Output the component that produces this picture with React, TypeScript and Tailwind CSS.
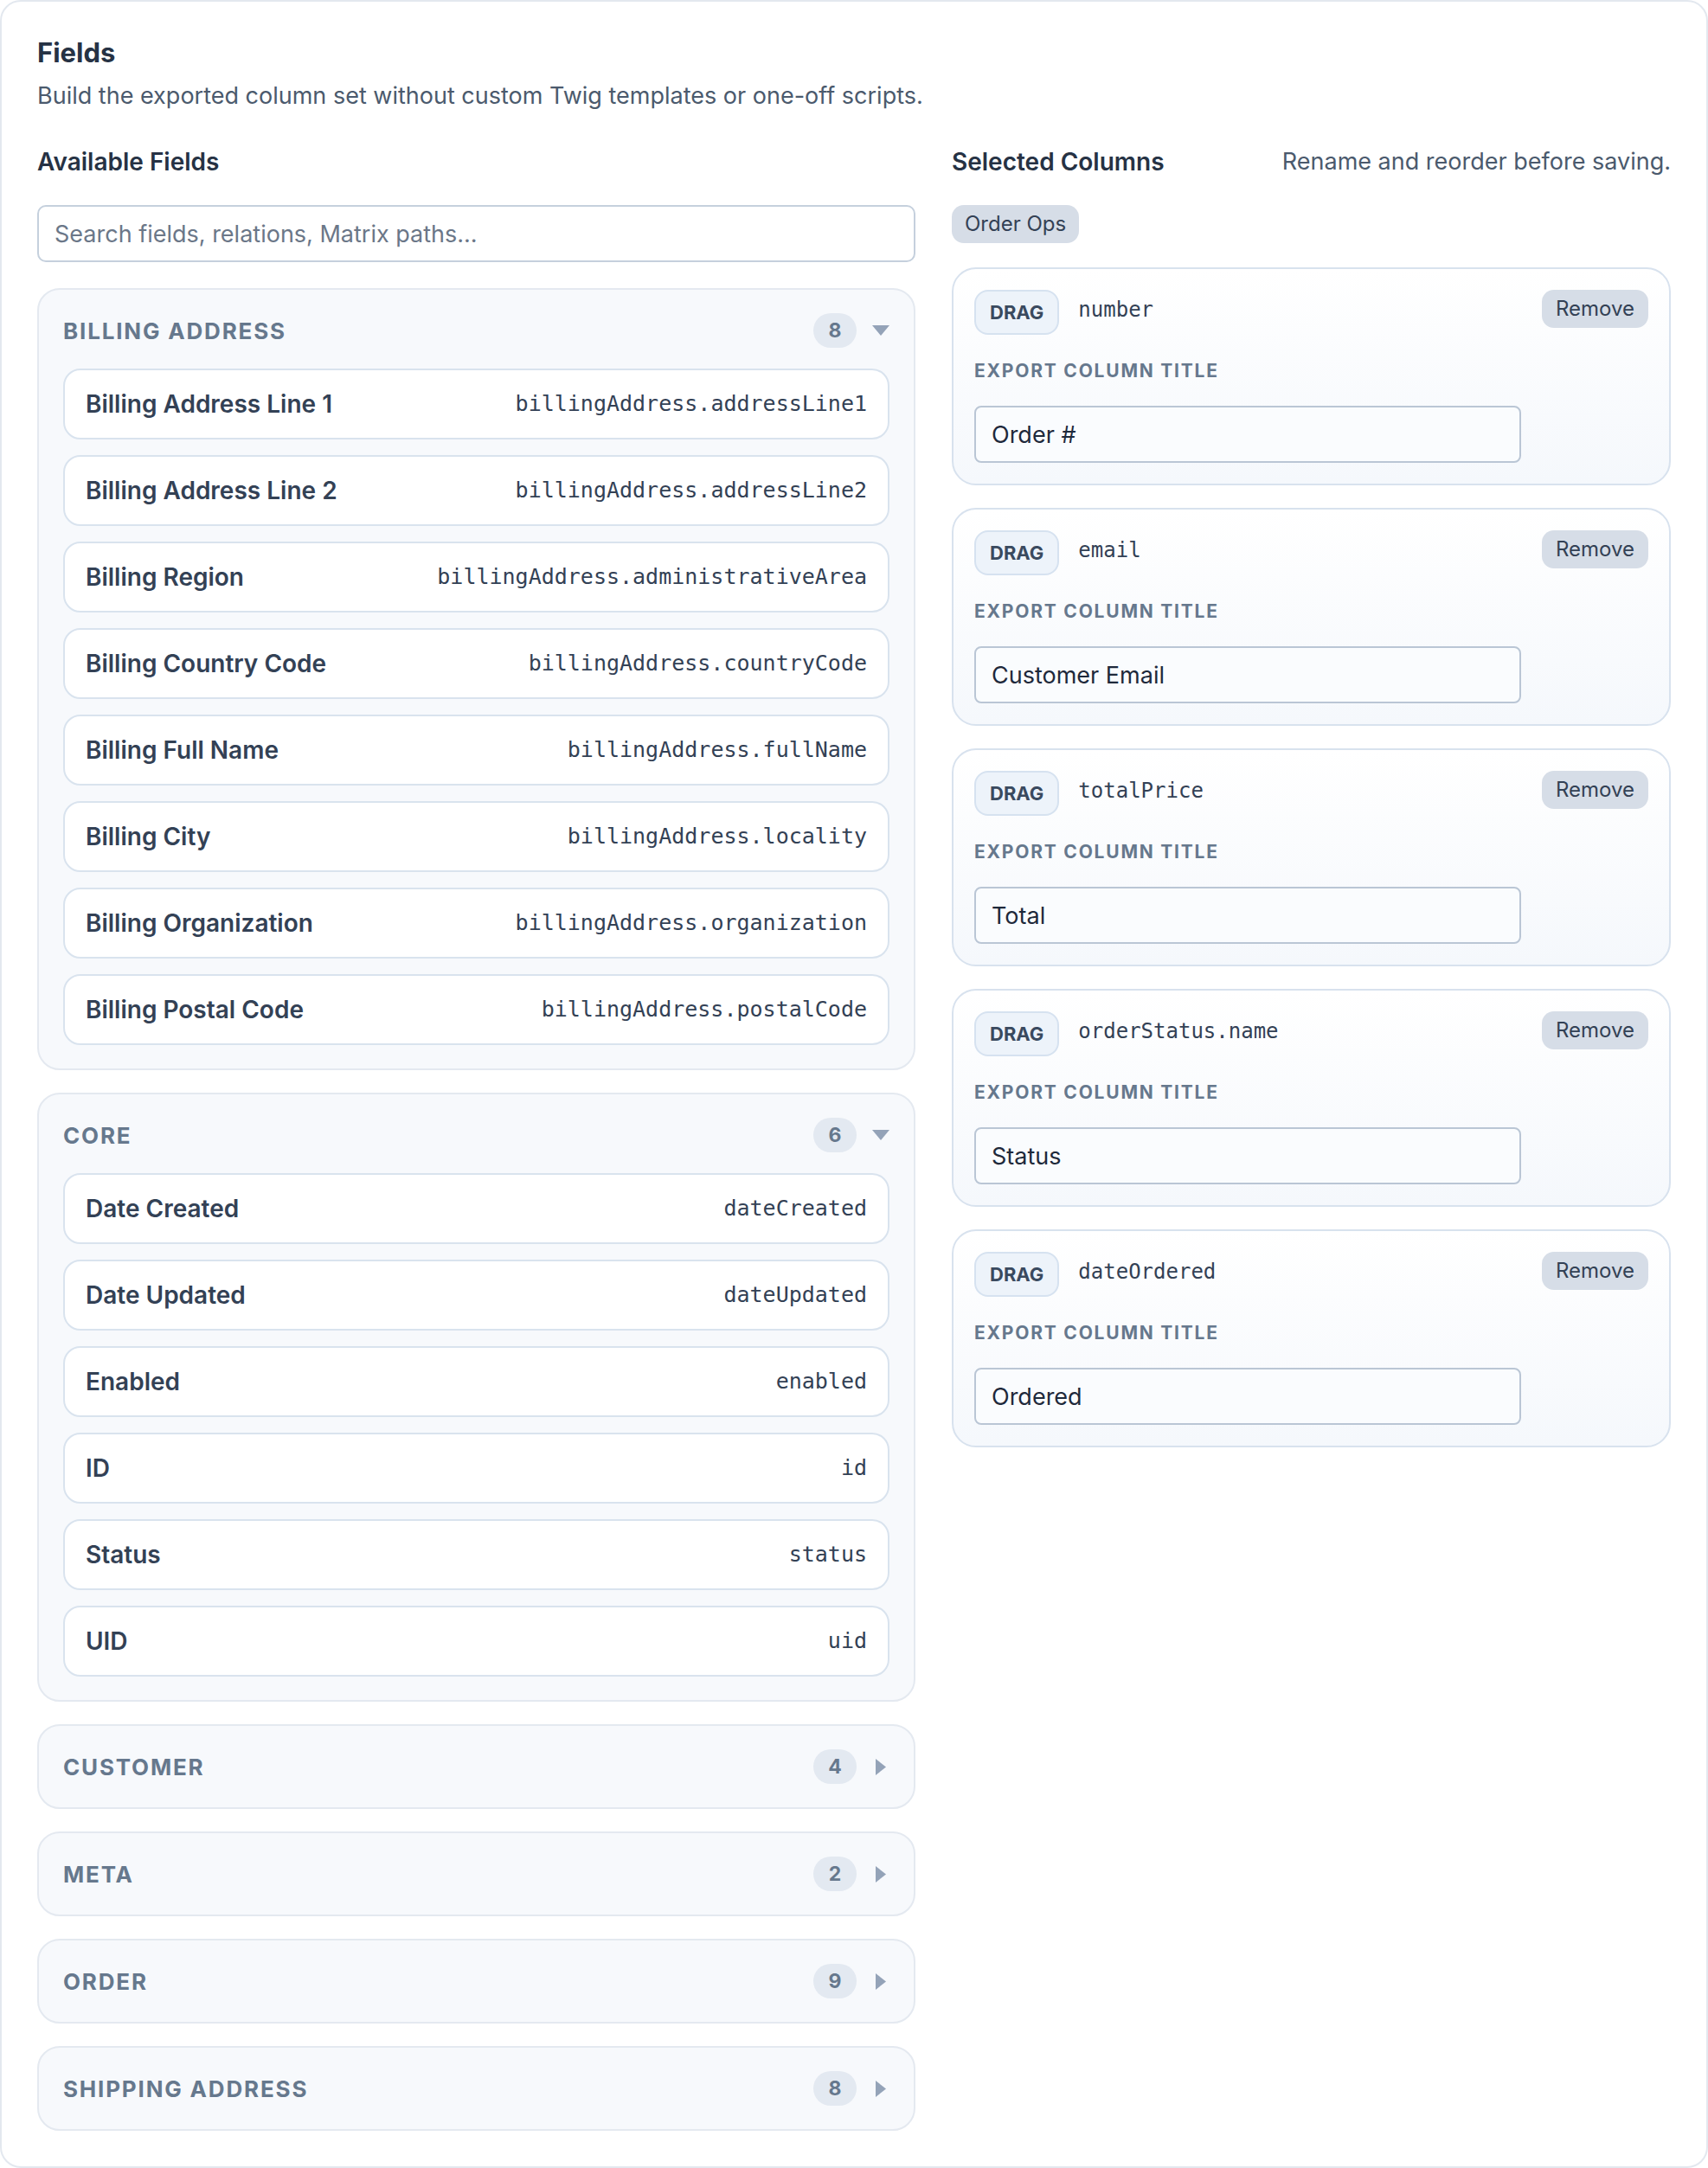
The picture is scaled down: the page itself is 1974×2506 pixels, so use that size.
import React from 'react';

type Field = { label: string; path: string };

type Group = { name: string; count: number; open: boolean; fields: Field[] };

const groups: Group[] = [
  {
    name: 'Billing Address',
    count: 8,
    open: true,
    fields: [
      { label: 'Billing Address Line 1', path: 'billingAddress.addressLine1' },
      { label: 'Billing Address Line 2', path: 'billingAddress.addressLine2' },
      { label: 'Billing Region', path: 'billingAddress.administrativeArea' },
      { label: 'Billing Country Code', path: 'billingAddress.countryCode' },
      { label: 'Billing Full Name', path: 'billingAddress.fullName' },
      { label: 'Billing City', path: 'billingAddress.locality' },
      { label: 'Billing Organization', path: 'billingAddress.organization' },
      { label: 'Billing Postal Code', path: 'billingAddress.postalCode' },
    ],
  },
  {
    name: 'Core',
    count: 6,
    open: true,
    fields: [
      { label: 'Date Created', path: 'dateCreated' },
      { label: 'Date Updated', path: 'dateUpdated' },
      { label: 'Enabled', path: 'enabled' },
      { label: 'ID', path: 'id' },
      { label: 'Status', path: 'status' },
      { label: 'UID', path: 'uid' },
    ],
  },
  { name: 'Customer', count: 4, open: false, fields: [] },
  { name: 'Meta', count: 2, open: false, fields: [] },
  { name: 'Order', count: 9, open: false, fields: [] },
  { name: 'Shipping Address', count: 8, open: false, fields: [] },
];

const selected = [
  { handle: 'number', title: 'Order #' },
  { handle: 'email', title: 'Customer Email' },
  { handle: 'totalPrice', title: 'Total' },
  { handle: 'orderStatus.name', title: 'Status' },
  { handle: 'dateOrdered', title: 'Ordered' },
];

const sans = "font-['Inter','Liberation_Sans',sans-serif]";
const mono = "font-['DejaVu_Sans_Mono','Liberation_Mono',monospace]";

function Caret({ open }: { open: boolean }) {
  return (
    <span className="flex h-[20px] w-[20px] items-center justify-center">
      {open ? (
        <svg width="20" height="12" viewBox="0 0 20 12">
          <polygon points="0,0 20,0 10,12" fill="#94a3b8" />
        </svg>
      ) : (
        <svg width="12" height="19" viewBox="0 0 12 19">
          <polygon points="0,0 12,9.5 0,19" fill="#94a3b8" />
        </svg>
      )}
    </span>
  );
}

function FieldGroup({ group }: { group: Group }) {
  return (
    <div className="rounded-[26px] border-2 border-[#e4e9f0] bg-[#f7f9fc] px-[28px] pt-[27px] pb-[27px]">
      <div className="flex h-[40px] items-center justify-between">
        <span className="text-[26px] font-bold uppercase tracking-[0.07em] text-[#66788d]">{group.name}</span>
        <div className="flex items-center gap-[18px]">
          <span className="flex h-[40px] w-[50px] items-center justify-center rounded-full bg-[#e3e9f1] text-[23px] font-bold text-[#66788d]">
            {group.count}
          </span>
          <Caret open={group.open} />
        </div>
      </div>
      {group.open && (
        <div className="mt-[24px] flex flex-col gap-[18px]">
          {group.fields.map((f) => (
            <div
              key={f.path}
              className="flex h-[82px] items-center justify-between rounded-[20px] border-2 border-[#d9e3ee] bg-white px-[24px]"
            >
              <span className="text-[28px] font-semibold text-[#334155]">{f.label}</span>
              <span className={`${mono} text-[25px] text-[#334155]`}>{f.path}</span>
            </div>
          ))}
        </div>
      )}
    </div>
  );
}

function ColumnCard({ handle, title }: { handle: string; title: string }) {
  return (
    <div className="rounded-[28px] border-2 border-[#d8e2ee] bg-gradient-to-b from-white to-[#f5f8fc] p-[24px]">
      <div className="flex items-start justify-between">
        <div className="flex items-start gap-[22px]">
          <span className="flex h-[52px] items-center rounded-[16px] border-2 border-[#d6e2f0] bg-[#edf3fa] px-[16px] text-[22px] font-bold text-[#3a4a5f]">
            DRAG
          </span>
          <span className={`${mono} pt-[9px] text-[24px] leading-[28px] text-[#334155]`}>{handle}</span>
        </div>
        <button className="flex h-[44px] items-center rounded-[14px] bg-[#d6dde7] px-[16px] text-[24px] text-[#334155]">
          Remove
        </button>
      </div>
      <div className="mt-[28px] text-[21px] font-bold uppercase leading-[28px] tracking-[0.085em] text-[#66788d]">
        Export Column Title
      </div>
      <input
        readOnly
        value={title}
        className="mt-[26px] block h-[66px] w-[632px] rounded-[8px] border-2 border-[#bac6d5] bg-[#fafcfe] px-[18px] text-[27px] text-[#1e293b] outline-none"
      />
    </div>
  );
}

export default function App() {
  return (
    <div className={`${sans} min-h-screen bg-white`}>
      <div className="rounded-[24px] border-2 border-[#e3e8ef] bg-white p-[41px]">
        <h2 className="text-[31px] font-bold leading-[36px] text-[#263244]">Fields</h2>
        <p className="mt-[14px] text-[27px] leading-[36px] text-[#4b5a6d]">
          Build the exported column set without custom Twig templates or one-off scripts.
        </p>

        <div className="mt-[40px] grid grid-cols-[1015px_1fr] gap-[42px]">
          {/* Available fields */}
          <div>
            <div className="flex h-[36px] items-center">
              <h3 className="text-[28px] font-semibold text-[#263244]">Available Fields</h3>
            </div>
            <input
              placeholder="Search fields, relations, Matrix paths..."
              className="mt-[32px] block h-[66px] w-full rounded-[10px] border-2 border-[#c5d0dd] bg-white px-[18px] text-[27px] text-[#1e293b] outline-none placeholder:text-[#6b7788]"
            />
            <div className="mt-[30px] flex flex-col gap-[26px]">
              {groups.map((g) => (
                <FieldGroup key={g.name} group={g} />
              ))}
            </div>
          </div>

          {/* Selected columns */}
          <div>
            <div className="flex h-[36px] items-center justify-between">
              <h3 className="text-[28px] font-semibold text-[#263244]">Selected Columns</h3>
              <span className="text-[27px] text-[#4b5a6d]">Rename and reorder before saving.</span>
            </div>
            <div className="mt-[32px] flex">
              <span className="flex h-[44px] items-center rounded-[14px] bg-[#d6dde7] px-[15px] text-[24px] text-[#334155]">
                Order Ops
              </span>
            </div>
            <div className="mt-[28px] flex flex-col gap-[26px]">
              {selected.map((s) => (
                <ColumnCard key={s.handle} handle={s.handle} title={s.title} />
              ))}
            </div>
          </div>
        </div>
      </div>
    </div>
  );
}
